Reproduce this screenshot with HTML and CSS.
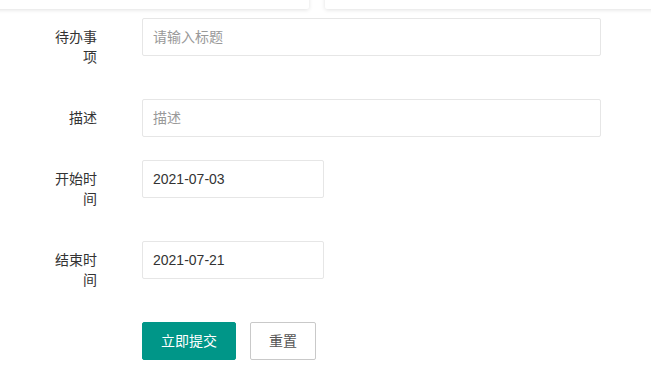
FILE: index.html
```html
<!DOCTYPE html>
<html lang="zh-CN">
<head>
<meta charset="utf-8">
<title>待办事项</title>
<link rel="stylesheet" href="styles.css">
</head>
<body>
<div class="page">
  <div class="cards">
    <div class="card card-left"></div>
    <div class="card card-right"></div>
  </div>
  <form class="form">
    <div class="form-item">
      <label class="form-label">待办事项</label>
      <div class="input-block"><input class="input" type="text" placeholder="请输入标题"></div>
    </div>
    <div class="form-item">
      <label class="form-label">描述</label>
      <div class="input-block"><input class="input" type="text" placeholder="描述"></div>
    </div>
    <div class="form-item">
      <label class="form-label">开始时间</label>
      <div class="input-inline"><input class="input" type="text" value="2021-07-03"></div>
    </div>
    <div class="form-item">
      <label class="form-label">结束时间</label>
      <div class="input-inline"><input class="input" type="text" value="2021-07-21"></div>
    </div>
    <div class="form-item buttons">
      <button type="button" class="btn btn-primary">立即提交</button>
      <button type="button" class="btn btn-default">重置</button>
    </div>
  </form>
</div>
</body>
</html>
```

FILE: styles.css
```css
* { box-sizing: border-box; }
html, body {
  margin: 0;
  padding: 0;
  background: #fff;
  font-family: "Liberation Sans", "Noto Sans CJK SC", sans-serif;
  font-size: 14px;
  color: #333;
}
.page {
  width: 651px;
  height: 375px;
  overflow: hidden;
}
.cards {
  display: flex;
  gap: 16px;
  margin-top: -40px;
  margin-left: -20px;
  height: 49px;
}
.card {
  flex: none;
  background: #fff;
  box-shadow: 0 1px 4px rgba(0, 0, 0, 0.12);
  border-radius: 2px;
}
.card-left { width: 329px; }
.card-right { width: 400px; }
.form {
  padding: 9px 0 0 0;
}
.form-item {
  display: flex;
  align-items: flex-start;
  margin-bottom: 23px;
}
.form-label {
  width: 142px;
  padding: 9px 45px 9px 55px;
  line-height: 20px;
  text-align: right;
  color: #333;
  flex: none;
}
.input-block { width: 459px; }
.input-inline { width: 182px; }
.input {
  display: block;
  width: 100%;
  height: 38px;
  border: 1px solid #e6e6e6;
  border-radius: 2px;
  padding: 0 10px;
  font-family: "Liberation Sans", "Noto Sans CJK SC", sans-serif;
  font-size: 14px;
  color: #333;
  background: #fff;
  outline: none;
}
.input::placeholder { color: #999; }
.buttons {
  padding-left: 142px;
  gap: 14px;
}
.btn {
  height: 38px;
  line-height: 36px;
  padding: 0 18px;
  font-family: "Liberation Sans", "Noto Sans CJK SC", sans-serif;
  font-size: 14px;
  border-radius: 2px;
  cursor: pointer;
}
.btn-primary {
  background: #009688;
  color: #fff;
  border: 1px solid #009688;
}
.btn-default {
  background: #fff;
  color: #555;
  border: 1px solid #c9c9c9;
}
```
